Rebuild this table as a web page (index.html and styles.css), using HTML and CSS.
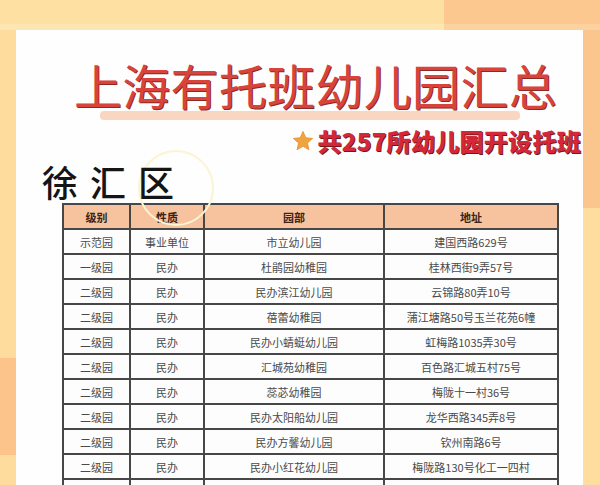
FILE: index.html
```html
<!DOCTYPE html>
<html lang="zh-CN">
<head>
<meta charset="utf-8">
<title>上海有托班幼儿园汇总</title>
<link rel="stylesheet" href="styles.css">
</head>
<body>
<div class="topbar">
  <div class="top-left"></div>
  <div class="top-right"></div>
</div>
<div class="main">
  <div class="strip strip-left"></div>
  <div class="card">
    <h1 class="title">上海有托班幼儿园汇总</h1>
    <div class="title-band"></div>
    <div class="subtitle">
      <svg class="star" viewBox="0 0 24 24" width="22" height="22"><path d="M12 1.5l3.1 6.9 7.4.8-5.6 5 1.6 7.4L12 17.8l-6.5 3.8 1.6-7.4-5.6-5 7.4-.8z" fill="#f1a33c" stroke="#e08a2a" stroke-width="0.8"/></svg>
      <span class="subtitle-text">共257所幼儿园开设托班</span>
    </div>
    <div class="district">
      <span class="district-ring"></span>
      <span class="district-name">徐汇区</span>
    </div>
    <table class="list">
      <colgroup><col class="c1"><col class="c2"><col class="c3"><col class="c4"></colgroup>
      <thead>
        <tr><th>级别</th><th>性质</th><th>园部</th><th>地址</th></tr>
      </thead>
      <tbody>
        <tr><td>示范园</td><td>事业单位</td><td>市立幼儿园</td><td>建国西路629号</td></tr>
        <tr><td>一级园</td><td>民办</td><td>杜鹃园幼稚园</td><td>桂林西街9弄57号</td></tr>
        <tr><td>二级园</td><td>民办</td><td>民办滨江幼儿园</td><td>云锦路80弄10号</td></tr>
        <tr><td>二级园</td><td>民办</td><td>蓓蕾幼稚园</td><td>蒲江塘路50号玉兰花苑6幢</td></tr>
        <tr><td>二级园</td><td>民办</td><td>民办小蜻蜓幼儿园</td><td>虹梅路1035弄30号</td></tr>
        <tr><td>二级园</td><td>民办</td><td>汇城苑幼稚园</td><td>百色路汇城五村75号</td></tr>
        <tr><td>二级园</td><td>民办</td><td>蕊苾幼稚园</td><td>梅陇十一村36号</td></tr>
        <tr><td>二级园</td><td>民办</td><td>民办太阳船幼儿园</td><td>龙华西路345弄8号</td></tr>
        <tr><td>二级园</td><td>民办</td><td>民办方馨幼儿园</td><td>钦州南路6号</td></tr>
        <tr><td>二级园</td><td>民办</td><td>民办小红花幼儿园</td><td>梅陇路130号化工一四村</td></tr>
        <tr><td></td><td></td><td></td><td></td></tr>
      </tbody>
    </table>
  </div>
  <div class="strip strip-right"></div>
</div>
</body>
</html>
```

FILE: styles.css
```css
* { box-sizing: border-box; }
html, body { margin: 0; padding: 0; }
body {
  width: 600px;
  height: 485px;
  overflow: hidden;
  background: #fddea2;
  font-family: "Noto Sans CJK SC", "Noto Sans", sans-serif;
}
.topbar {
  display: flex;
  height: 30px;
}
.top-left {
  width: 444px;
  background: linear-gradient(#fde0a2 0, #fde0a2 24px, #fde6b2 24px, #fde6b2 30px);
}
.top-right {
  flex: 1;
  background: linear-gradient(#fcc890 0, #fcc890 24px, #fcd29e 24px, #fcd29e 30px);
}
.main {
  display: flex;
  height: 455px;
}
.strip { height: 100%; }
.strip-left {
  width: 16px;
  background: linear-gradient(#fddc9e 0, #fddc9e 328px, #fcc48b 328px, #fcc48b 425px, #fddc9e 425px);
}
.strip-right {
  width: 17px;
  background: linear-gradient(#fbc68e 0, #fbc68e 178px, #fedd9f 178px);
}
.card {
  width: 567px;
  background: #fefefe;
  position: relative;
  overflow: hidden;
}
.title {
  margin: 30px 0 0 58px;
  font-size: 48px;
  line-height: 48px;
  font-weight: 400;
  color: #d8433b;
  text-shadow: 1px 1px 0 #8a2a24;
  letter-spacing: 0.3px;
  white-space: nowrap;
}
.title-band {
  margin: 3px 0 0 84px;
  width: 420px;
  height: 9px;
  background: #f9d6c2;
  border-radius: 4px;
}
.subtitle {
  display: flex;
  align-items: center;
  justify-content: flex-end;
  margin-top: 8px;
  height: 26px;
  gap: 4px;
  padding-right: 2px;
}
.star { display: block; }
.subtitle-text {
  font-size: 24px;
  line-height: 26px;
  font-weight: 900;
  color: #d4283a;
  text-shadow: 1px 1px 0 #6e1a1a;
  white-space: nowrap;
  letter-spacing: 0.3px;
}
.district {
  position: relative;
  margin: 8px 0 0 26px;
  height: 38px;
}
.district-ring {
  position: absolute;
  left: 96px;
  top: -12px;
  width: 76px;
  height: 76px;
  border-radius: 50%;
  border: 2px solid #faf4d2;
}
.district-name {
  position: relative;
  font-size: 36px;
  line-height: 38px;
  color: #151515;
  letter-spacing: 12px;
  font-weight: 500;
}
.list {
  margin: 3px 0 0 46px;
  border-collapse: collapse;
  table-layout: fixed;
  width: 495px;
  font-size: 11px;
}
.c1 { width: 67px; }
.c2 { width: 74px; }
.c3 { width: 180px; }
.c4 { width: 174px; }
.list th, .list td {
  border: 2px solid #474747;
  height: 25px;
  padding: 0;
  text-align: center;
  vertical-align: middle;
  white-space: nowrap;
  line-height: 14px;
}
.list th {
  background: #f7c39e;
  color: #3a2418;
  font-weight: 700;
  font-size: 11px;
}
.list td {
  color: #4a4a4a;
  background: #fdfdfd;
}
```
